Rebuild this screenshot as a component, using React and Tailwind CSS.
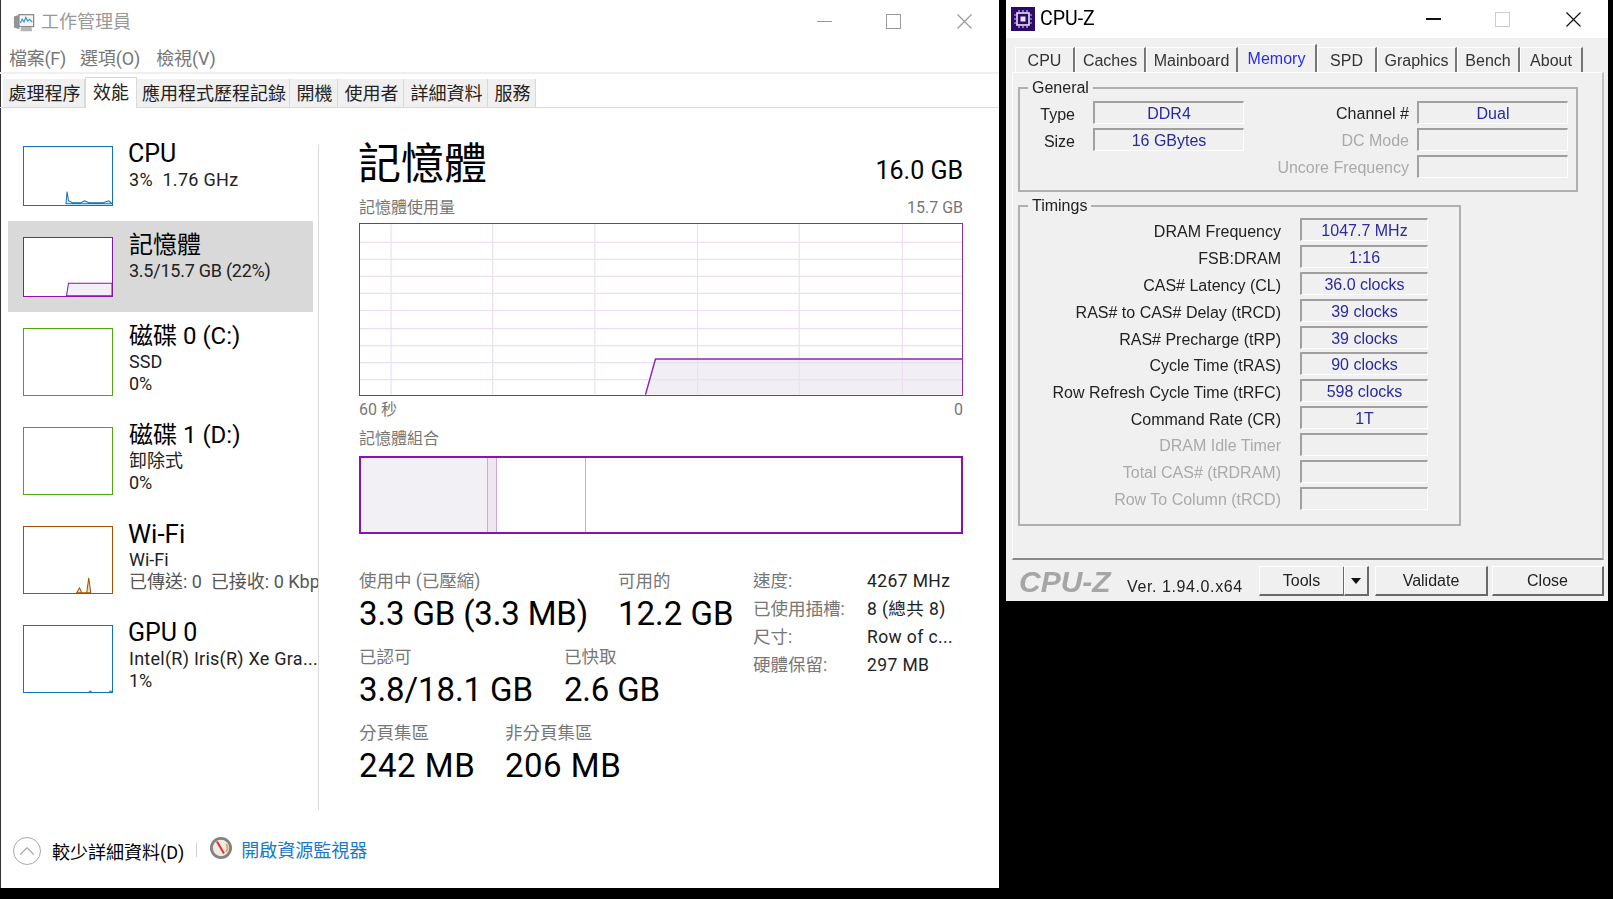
import { ChevronUp } from 'lucide-react';

function Thumb({ color, tall, children }) {
  return (
    <div className={`shrink-0 w-[90px] border-[1.5px] bg-white ${tall ? 'h-[68px]' : 'h-[60px]'}`} style={{ borderColor: color }}>
      <svg viewBox={tall ? '0 0 87 65' : '0 0 87 57'} className="w-full h-full block">
        {children}
      </svg>
    </div>
  );
}

function SideRow({ title, sub, third, thirdGray, color, tall, selected, titleClass, subClass, children }) {
  return (
    <div className={`flex w-[305px] ml-[8px] pl-[15px] pt-[16px] ${tall ? 'h-[99px]' : 'h-[91px]'} ${selected ? 'bg-[#d9d9d9]' : ''}`}>
      <Thumb color={color} tall={tall}>{children}</Thumb>
      <div className="ml-[16px] -mt-[8px] whitespace-nowrap text-black">
        <div className={`h-[30px] leading-[32px] text-[24px] ${titleClass || ''}`}>{title}</div>
        <div className={`h-[22px] leading-[24px] text-[18px] text-[#222] ${subClass || ''}`}>{sub}</div>
        {third && <div className={`h-[23px] leading-[24px] text-[18px] ${thirdGray ? 'text-[#555]' : 'text-[#222]'}`}>{third}</div>}
      </div>
    </div>
  );
}

function Sidebar() {
  return (
    <div className="w-[318px] pt-[23px] overflow-hidden shrink-0">
      <SideRow title="CPU" sub={'3%\u00a0\u00a01.76 GHz'} subClass="tracking-[0.3px]" titleClass="text-[25px] -ml-[1px]" color="#1174b5">
        <path d="M41.5 56 L42.5 44 L44 53 L48 55 L56 55 L60 53 L64 55 L72 55 L78 55 L84 53 L87 56 Z" fill="#d9ebf6" stroke="#1174b5" strokeWidth="1" />
      </SideRow>
      <SideRow selected title="記憶體" sub="3.5/15.7 GB (22%)" subClass="tracking-[-0.25px]" color="#8b12ae">
        <path d="M42 57 L44 44.5 L87 44.5 L87 57 Z" fill="#f2eff5" stroke="#8b12ae" strokeWidth="1" />
      </SideRow>
      <SideRow tall title="磁碟 0 (C:)" sub="SSD" third="0%" color="#4da60c" />
      <SideRow tall title="磁碟 1 (D:)" sub="卸除式" third="0%" color="#4da60c" />
      <SideRow tall title="Wi-Fi" titleClass="text-[26px] -ml-[1px]" sub="Wi-Fi" third={'已傳送: 0\u00a0\u00a0已接收: 0 Kbps'} thirdGray color="#a74f01">
        <path d="M52 65 L55 60 L57 65 L62 65 L64 50 L66 65 Z" fill="#f0dccb" stroke="#a74f01" strokeWidth="1" />
      </SideRow>
      <SideRow tall title="GPU 0" titleClass="text-[25px] -ml-[1px]" sub="Intel(R) Iris(R) Xe Gra..." subClass="tracking-[0.25px]" third="1%" color="#1174b5">
        <path d="M64 64.5 L67 64.5 M84 64.5 L87 64.5" stroke="#1174b5" strokeWidth="1" />
      </SideRow>
    </div>
  );
}

function UsageGraph() {
  const vs = [31, 132.5, 234.5, 337, 438.5, 541.5];
  const hs = [18, 35, 52, 69, 86, 104, 121, 138, 155];
  return (
    <div className="h-[173px] border-[1.5px] border-[#8b2bb0] bg-white">
      <svg viewBox="0 0 601 170" className="w-full h-full block">
        <path d="M285 170 L295 134.5 L601 134.5 L601 170 Z" fill="#f1eff4" />
        {vs.map((x) => <line key={x} x1={x} y1="0" x2={x} y2="170" stroke="#ecdff1" strokeWidth="1.2" />)}
        {hs.map((y) => <line key={y} x1="0" y1={y} x2="601" y2={y} stroke="#ecdff1" strokeWidth="1.2" />)}
        <path d="M285 170 L295 134.5 L601 134.5" fill="none" stroke="#8b2bb0" strokeWidth="1.5" />
      </svg>
    </div>
  );
}

function CompositionBar() {
  return (
    <div className="flex h-[78px] border-[2px] border-[#8b12ae] bg-white">
      <div className="w-[126px] bg-[#f2eff5]" />
      <div className="w-[10px] bg-[#efe6f2] border-x border-[#cda8da]" />
      <div className="w-[89px] border-r border-[#cda8da]" />
    </div>
  );
}

function Stat({ label, value, w, valueClass }) {
  return (
    <div className="whitespace-nowrap" style={{ width: w }}>
      <div className="h-[24px] leading-[25px] text-[17.5px] text-[#777]">{label}</div>
      <div className={`h-[40px] leading-[42px] text-[33px] text-black ${valueClass || ''}`}>{value}</div>
    </div>
  );
}

function Stats() {
  const info = [
    ['速度:', '4267 MHz'],
    ['已使用插槽:', '8 (總共 8)'],
    ['尺寸:', 'Row of c...'],
    ['硬體保留:', '297 MB'],
  ];
  return (
    <div className="flex">
      <div className="w-[394px] mt-[35px] shrink-0">
        <div className="flex">
          <Stat w={259} label="使用中 (已壓縮)" value="3.3 GB (3.3 MB)" valueClass="tracking-[-0.15px]" />
          <Stat label="可用的" value="12.2 GB" />
        </div>
        <div className="flex mt-[12px]">
          <Stat w={205} label="已認可" value="3.8/18.1 GB" valueClass="tracking-[-0.1px]" />
          <Stat label="已快取" value="2.6 GB" valueClass="tracking-[-0.2px]" />
        </div>
        <div className="flex mt-[12px]">
          <Stat w={146} label="分頁集區" value="242 MB" valueClass="tracking-[0.5px]" />
          <Stat label="非分頁集區" value="206 MB" valueClass="tracking-[0.5px]" />
        </div>
      </div>
      <div className="mt-[33px] whitespace-nowrap text-[17.5px]">
        {info.map(([k, v]) => (
          <div key={k} className="flex h-[28px] leading-[29px]">
            <div className="w-[114px] text-[#777]">{k}</div>
            <div className="text-[#222] tracking-[0.4px]">{v}</div>
          </div>
        ))}
      </div>
    </div>
  );
}

function TaskManagerIcon() {
  return (
    <svg viewBox="0 0 24 24" className="w-[22px] h-[22px]">
      <path d="M1 6 L7 4 L7 20 L1 18 Z" fill="#8f9590" />
      <rect x="6.5" y="4" width="16" height="13" fill="#f4f7f9" stroke="#8b8b8b" strokeWidth="1.4" />
      <path d="M8 13 L10 9 L12 12 L14 7 L16 11 L18 9 L21 12" fill="none" stroke="#3f94d2" strokeWidth="1.3" />
      <path d="M9 17.5 L20 17.5 L21 22 L8 22 Z" fill="#b5b5b5" />
    </svg>
  );
}

function ResmonIcon() {
  return (
    <svg viewBox="0 0 24 24" className="w-[24px] h-[24px]">
      <circle cx="12" cy="12" r="11" fill="#85827d" />
      <circle cx="12" cy="12" r="8.2" fill="#eeece8" />
      <path d="M8 5.5 L15 17.5" stroke="#d8322a" strokeWidth="2" />
      <path d="M17 8 A6.5 6.5 0 0 1 17 16" fill="none" stroke="#e8a55e" strokeWidth="2" />
    </svg>
  );
}

// flat Windows caption buttons, thin strokes with square corners
function CaptionButtons({ minColor, maxColor, closeColor, gapA, gapB, stroke }) {
  return (
    <div className="ml-auto mr-[27px] flex items-center">
      <div className="w-[15px] h-[1.5px]" style={{ background: minColor }} />
      <div className="w-[15px] h-[15px] border-[1.5px]" style={{ borderColor: maxColor, marginLeft: gapA }} />
      <svg viewBox="0 0 15 15" className="w-[15px] h-[15px]" style={{ marginLeft: gapB }}>
        <path d="M0.5 0.5 L14.5 14.5 M14.5 0.5 L0.5 14.5" stroke={closeColor} strokeWidth={stroke} />
      </svg>
    </div>
  );
}

function TaskManager() {
  const tabs = [
    ['處理程序', 'w-[82px]'],
    ['效能', 'w-[52px]'],
    ['應用程式歷程記錄', 'w-[153px]'],
    ['開機', 'w-[48px]'],
    ['使用者', 'w-[66px]'],
    ['詳細資料', 'w-[84px]'],
    ['服務', 'w-[48px]'],
  ];
  return (
    <div className="w-[999px] h-[888px] shrink-0 bg-white shadow-[inset_1px_0_0_#333] flex flex-col overflow-hidden">
      <div className="h-[43px] shrink-0 flex items-center pl-[13px]">
        <TaskManagerIcon />
        <span className="ml-[6px] text-[18px] text-[#999]">工作管理員</span>
        <CaptionButtons minColor="#999" maxColor="#999" closeColor="#999" gapA="54px" gapB="56px" stroke="1.2" />
      </div>
      <div className="h-[31px] shrink-0 flex items-center pl-[9px] pt-[2px] text-[18px] text-[#777] border-b-2 border-[#f0f0f0]">
        <span className="tracking-[-0.3px]">檔案(F)</span>
        <span className="ml-[14px] tracking-[-0.1px]">選項(O)</span>
        <span className="ml-[16px] tracking-[-0.1px]">檢視(V)</span>
      </div>
      <div className="h-[34px] shrink-0 flex items-end pl-[3px] border-b border-[#d9d9d9]">
        {tabs.map(([t, w]) => (
          t === '效能' ? (
            <div key={t} className={`${w} h-[31px] -mb-px bg-white border border-b-0 border-[#d9d9d9] text-center text-[18px] leading-[29px] text-[#222]`}>{t}</div>
          ) : (
            <div key={t} className={`${w} h-[28px] pl-[2px] bg-[#f0f0f0] border-r border-[#d9d9d9] text-center text-[18px] leading-[29px] text-[#222] whitespace-nowrap`}>{t}</div>
          )
        ))}
      </div>
      <div className="h-[722px] shrink-0 flex">
        <Sidebar22 />
        <div className="w-px h-[665px] mt-[37px] shrink-0 bg-[#d9d9d9]" />
        <div className="ml-[40px] w-[604px] pt-[26px]">
          <div className="flex justify-between items-end h-[56px]">
            <div className="text-[43px] leading-[60px] h-[56px] -ml-[1px] text-black">記憶體</div>
            <div className="text-[25px] leading-[42px] h-[40px] text-black">16.0 GB</div>
          </div>
          <div className="flex justify-between h-[20px] mt-[8px] leading-[20px] text-[16px] text-[#777]">
            <span>記憶體使用量</span>
            <span>15.7 GB</span>
          </div>
          <div className="mt-[5px]"><UsageGraph /></div>
          <div className="flex justify-between h-[20px] mt-[3px] leading-[21px] text-[16px] text-[#777]">
            <span>60 秒</span>
            <span>0</span>
          </div>
          <div className="h-[20px] mt-[9px] leading-[21px] text-[16px] text-[#777]">記憶體組合</div>
          <div className="mt-[8px]"><CompositionBar /></div>
          <Stats />
        </div>
      </div>
      <div className="flex-1 flex items-start pt-[7px] pl-[13px]">
        <div className="w-[28px] h-[28px] rounded-full border border-[#a8a8a8] flex items-center justify-center">
          <ChevronUp className="w-[26px] h-[26px] text-[#a8a8a8]" strokeWidth={1} />
        </div>
        <span className="ml-[11px] h-[28px] leading-[32px] text-[18px] text-black">較少詳細資料(D)</span>
        <div className="ml-[12px] mt-[6px] w-px h-[14px] bg-[#d0d0d0]" />
        <div className="ml-[12px] -mt-[1px]"><ResmonIcon /></div>
        <span className="ml-[8px] h-[28px] leading-[28px] text-[18px] text-[#1979ca]">開啟資源監視器</span>
      </div>
    </div>
  );
}

function Sidebar22() {
  return <div className="-mt-px shrink-0"><Sidebar /></div>;
}

const sunken = 'border border-t-2 border-l-2 border-t-[#a0a0a0] border-l-[#a0a0a0] border-r-white border-b-white';

function CzField({ value, w }) {
  return (
    <div className={`${w} h-[23px] ${sunken} text-center leading-[21px] text-[16px] text-[#2a2aa0] whitespace-nowrap`}>{value}</div>
  );
}

function Legend({ children }) {
  return <div className="absolute -top-[11px] left-[8px] px-[4px] bg-[#f0f0f0] text-[16px] leading-[20px] text-[#222]">{children}</div>;
}

function CzButton({ children, className }) {
  return (
    <div className={`h-[30px] bg-[#f0f0f0] border border-t-white border-l-white border-r-[#696969] border-b-[#696969] border-b-2 border-r-2 text-center leading-[28px] text-[16px] text-[#222] ${className}`}>{children}</div>
  );
}

function CpuZ() {
  const tabs = [
    ['CPU', 'w-[60px]'],
    ['Caches', 'w-[71px]'],
    ['Mainboard', 'w-[92px]'],
    ['Memory', 'w-[79px]'],
    ['SPD', 'w-[60px]'],
    ['Graphics', 'w-[80px]'],
    ['Bench', 'w-[63px]'],
    ['About', 'w-[63px]'],
  ];
  const timings = [
    ['DRAM Frequency', '1047.7 MHz'],
    ['FSB:DRAM', '1:16'],
    ['CAS# Latency (CL)', '36.0 clocks'],
    ['RAS# to CAS# Delay (tRCD)', '39 clocks'],
    ['RAS# Precharge (tRP)', '39 clocks'],
    ['Cycle Time (tRAS)', '90 clocks'],
    ['Row Refresh Cycle Time (tRFC)', '598 clocks'],
    ['Command Rate (CR)', '1T'],
    ['DRAM Idle Timer', ''],
    ['Total CAS# (tRDRAM)', ''],
    ['Row To Column (tRCD)', ''],
  ];
  return (
    <div className="w-[602px] h-[601px] shrink-0 bg-[#f0f0f0] flex flex-col font-['Liberation_Sans',sans-serif] blur-[0.4px]">
      <div className="h-[38px] shrink-0 bg-white flex items-center pl-[5px]">
        <svg viewBox="0 0 24 24" className="w-[24px] h-[24px]">
          <rect width="24" height="24" fill="#2c0a6b" />
          <rect x="6" y="6" width="12" height="12" fill="none" stroke="#e8e4f2" strokeWidth="1.6" />
          <rect x="9.5" y="9.5" width="5" height="5" fill="#e8e4f2" />
          <path d="M8 3v2M12 3v2M16 3v2M8 19v2M12 19v2M16 19v2M3 8h2M3 12h2M3 16h2M19 8h2M19 12h2M19 16h2" stroke="#c9c0e4" strokeWidth="1.2" />
        </svg>
        <span className="ml-[5px] text-[19.5px] text-black font-['Roboto',sans-serif]">CPU-Z</span>
        <CaptionButtons minColor="#111" maxColor="#ccc" closeColor="#111" gapA="54px" gapB="56px" stroke="1.2" />
      </div>
      <div className="h-[34px] shrink-0 flex items-end pl-[9px]">
        {tabs.map(([t, w]) => (
          t === 'Memory' ? (
            <div key={t} className={`${w} h-[29px] -mb-px bg-[#f0f0f0] border-t border-white border-r-2 border-r-[#777] text-center leading-[27px] text-[16px] text-[#2a2af0]`}>{t}</div>
          ) : (
            <div key={t} className={`${w} h-[25px] border-t border-l border-white border-r-2 border-r-[#777] text-center leading-[26px] text-[16px] text-[#333]`}>{t}</div>
          )
        ))}
      </div>
      <div className="h-[488px] ml-[6px] w-[592px] shrink-0 border-t border-l border-white border-r-2 border-b-2 border-r-[#c0c0c0] border-b-[#888] pt-[14px] pl-[5px]">
        <div className="relative w-[560px] h-[105px] border-2 border-[#b0b0b0]">
          <Legend>General</Legend>
          <div className="flex mt-[12px]">
            <div className="w-[55px] text-right text-[16px] leading-[25px] text-[#222] mt-[1px]">
              <div className="h-[27px]">Type</div>
              <div className="h-[27px]">Size</div>
            </div>
            <div className="ml-[18px]">
              <CzField w="w-[151px]" value="DDR4" />
              <div className="mt-[4px]"><CzField w="w-[151px]" value="16 GBytes" /></div>
            </div>
            <div className="w-[165px] text-right text-[16px] leading-[24px] mt-[1px]">
              <div className="h-[27px] text-[#222]">Channel #</div>
              <div className="h-[27px] text-[#aaa]">DC Mode</div>
              <div className="h-[27px] text-[#aaa]">Uncore Frequency</div>
            </div>
            <div className="ml-[8px]">
              <CzField w="w-[151px]" value="Dual" />
              <div className="mt-[4px]"><CzField w="w-[151px]" value="" /></div>
              <div className="mt-[4px]"><CzField w="w-[151px]" value="" /></div>
            </div>
          </div>
        </div>
        <div className="relative w-[443px] h-[321px] mt-[13px] border-2 border-[#b0b0b0] pt-[11px]">
          <Legend>Timings</Legend>
          {timings.map(([k, v]) => (
            <div key={k} className="flex h-[26.9px]">
              <div className={`w-[261px] text-right text-[16px] whitespace-nowrap ${v ? 'text-[#222] leading-[27px]' : 'text-[#aaa] leading-[25px]'}`}>{k}</div>
              <div className="ml-[19px]"><CzField w="w-[128px]" value={v} /></div>
            </div>
          ))}
        </div>
      </div>
      <div className="flex-1 flex items-start pt-[6px] pl-[13px]">
        <span className="w-[100px] text-[30px] leading-[32px] font-bold italic text-[#a6a6a6]">CPU-Z</span>
        <span className="ml-[8px] mt-[9px] w-[132px] text-[16px] leading-[24px] tracking-[0.6px] text-[#222] whitespace-nowrap">Ver. 1.94.0.x64</span>
        <CzButton className="w-[86px]">Tools</CzButton>
        <CzButton className="w-[25px] -ml-px flex items-center justify-center">
          <svg viewBox="0 0 10 6" className="w-[10px] h-[6px]"><path d="M0 0 L10 0 L5 6 Z" fill="#111" /></svg>
        </CzButton>
        <CzButton className="w-[113px] ml-[6px]">Validate</CzButton>
        <CzButton className="w-[112px] ml-[4px]">Close</CzButton>
      </div>
    </div>
  );
}

export default function App() {
  return (
    <div className="w-[1613px] h-[899px] bg-black flex items-start overflow-hidden font-['Roboto','Noto_Sans_CJK_TC',sans-serif]">
      <TaskManager />
      <div className="ml-[7px]"><CpuZ /></div>
    </div>
  );
}
